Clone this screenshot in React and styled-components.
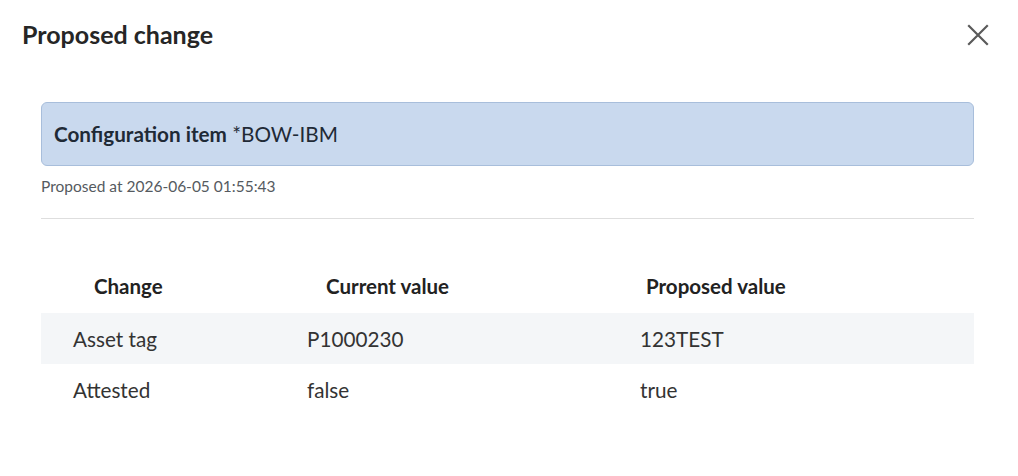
import styled, { createGlobalStyle } from "styled-components";

const GlobalStyle = createGlobalStyle`
    body {
        margin: 0;
        background: #ffffff;
        font-family: Lato, "Open Sans", sans-serif;
        color: #333333;
    }
`;

const changes = [
    { field: "Asset tag", current: "P1000230", proposed: "123TEST" },
    { field: "Attested", current: "false", proposed: "true" },
];

const headers = [
    { label: "Change", indent: 53 },
    { label: "Current value", indent: 51 },
    { label: "Proposed value", indent: 38 },
];

function CloseIcon() {
    return (
        <svg width="22" height="22" viewBox="0 0 22 22" fill="none">
            <path d="M2 2L20 20M20 2L2 20" stroke="#5a5a5a" strokeWidth="2.2" strokeLinecap="square" />
        </svg>
    );
}

export default function App() {
    return (
        <>
            <GlobalStyle />
            <Dialog>
                <Header>
                    <Title>Proposed change</Title>
                    <CloseButton aria-label="Close">
                        <CloseIcon />
                    </CloseButton>
                </Header>
                <Content>
                    <Banner>
                        <strong>Configuration item</strong>&nbsp;*BOW-IBM
                    </Banner>
                    <Meta>Proposed at 2026-06-05 01:55:43</Meta>
                    <Divider />
                    <Table>
                        <HeadRow>
                            {headers.map(h => (
                                <HeadCell key={h.label} $indent={h.indent}>{h.label}</HeadCell>
                            ))}
                        </HeadRow>
                        {changes.map((c, i) => (
                            <Row key={c.field} $striped={i % 2 === 0}>
                                <Cell>{c.field}</Cell>
                                <Cell>{c.current}</Cell>
                                <Cell>{c.proposed}</Cell>
                            </Row>
                        ))}
                    </Table>
                </Content>
            </Dialog>
        </>
    );
}

const Dialog = styled.div`
    width: 1018px;
    height: 476px;
    box-sizing: border-box;
    background: #ffffff;
`;

const Header = styled.div`
    display: flex;
    justify-content: space-between;
    align-items: center;
    padding: 16px 29px 0 22px;
    height: 36px;
`;

const Title = styled.h1`
    margin: 0;
    font-size: 25px;
    font-weight: 700;
    color: #262626;
    line-height: 30px;
`;

const CloseButton = styled.div`
    width: 22px;
    height: 22px;
    display: flex;
    margin-top: 2px;
    cursor: pointer;
`;

const Content = styled.div`
    padding: 0 44px 0 41px;
    margin-top: 50px;
`;

const Banner = styled.div`
    height: 64px;
    box-sizing: border-box;
    display: flex;
    align-items: center;
    padding-left: 12px;
    border: 1px solid #a8bedb;
    border-radius: 6px;
    background: #c9d9ee;
    font-size: 20.7px;
    color: #1f2a36;

    strong {
        font-weight: 700;
    }
`;

const Meta = styled.div`
    margin-top: 10px;
    font-size: 15.5px;
    line-height: 20px;
    color: #555a60;
`;

const Divider = styled.div`
    margin-top: 22px;
    height: 1px;
    background: #dedede;
`;

const Table = styled.div`
    margin-top: 52px;
`;

const HeadRow = styled.div`
    display: grid;
    grid-template-columns: 234px 333px 1fr;
    height: 42px;
    align-items: start;
`;

const HeadCell = styled.div`
    padding-left: ${p => p.$indent}px;
    font-size: 20.5px;
    font-weight: 700;
    color: #222222;
    line-height: 30px;
`;

const Row = styled.div`
    display: grid;
    grid-template-columns: 234px 333px 1fr;
    height: 51px;
    align-items: center;
    background: ${p => (p.$striped ? "#f4f6f8" : "transparent")};
`;

const Cell = styled.div`
    padding-left: 32px;
    font-size: 20.7px;
    color: #333333;
`;
